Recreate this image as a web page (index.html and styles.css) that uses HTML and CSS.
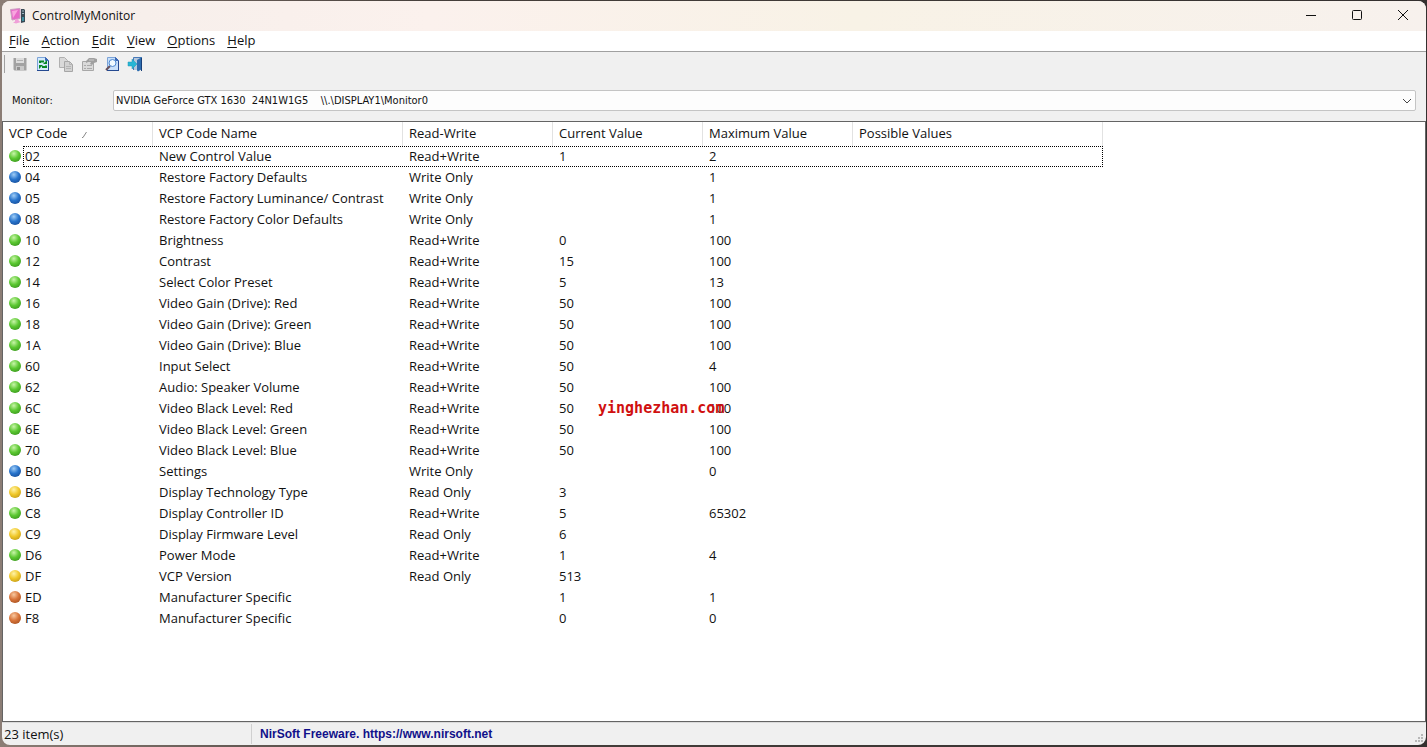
FILE: index.html
```
<!DOCTYPE html>
<html lang="en">

<head>
    <meta charset="UTF-8">
    <meta name="viewport" content="width=device-width, initial-scale=1.0">
    <title>ControlMyMonitor</title>
    <link rel="stylesheet" href="styles.css">
</head>

<body>
    <div class="window">
        <header class="title-bar">
            <svg class="app-icon" width="16" height="16" viewBox="0 0 16 16">
                <path d="M.5 1.500l9.500-1v10l-8 1.500z" fill="#e768c8" stroke="#c9a0c2"/>
                <path d="M2 3l6-1-5 8z" fill="#f8a6df"/>
                <path d="M5 11h3l1 2 2 1-5 1.500-3-1 2-1z" fill="#f0a0d8"/>
                <path d="M11 1h3l1 1v12l-4 1z" fill="#3a4a54"/>
                <path d="M12 3h2M12 5.500h2" stroke="#9fb8c4"/>
                <path d="M12 9h2v4h-2z" fill="#3f8fa0"/>
            </svg>
            <h1>ControlMyMonitor</h1>
            <div class="window-buttons">
                <button type="button" aria-label="Minimize">
                    <svg width="12" height="12" viewBox="0 0 12 12"><path d="M1 6.500h10"/></svg>
                </button>
                <button type="button" aria-label="Maximize">
                    <svg width="12" height="12" viewBox="0 0 12 12"><rect x="1.5" y="1.5" width="9" height="9" rx="1"/></svg>
                </button>
                <button type="button" aria-label="Close">
                    <svg width="12" height="12" viewBox="0 0 12 12"><path d="M1 1l10 10M11 1L1 11"/></svg>
                </button>
            </div>
        </header>

        <nav class="menu-bar">
            <button type="button"><u>F</u>ile</button>
            <button type="button"><u>A</u>ction</button>
            <button type="button"><u>E</u>dit</button>
            <button type="button"><u>V</u>iew</button>
            <button type="button"><u>O</u>ptions</button>
            <button type="button"><u>H</u>elp</button>
        </nav>

        <div class="tool-bar">
            <button type="button" aria-label="Save" disabled>
                <svg width="16" height="16" viewBox="0 0 16 16">
                    <path d="M1.500 2h13v12.500h-12l-1-1z" fill="#a2a2a2"/>
                    <path d="M4 2h8v5H4z" fill="#dcdcdc"/>
                    <path d="M5 4.500h6" stroke="#b0b0b0"/>
                    <path d="M4 10h8v4.500H4z" fill="#c9c9c9"/>
                    <path d="M5 11h3v3H5z" fill="#909090"/>
                </svg>
            </button>
            <button type="button" aria-label="Refresh">
                <svg width="16" height="16" viewBox="0 0 16 16">
                    <path d="M2.500 1.500h8l3 3v10h-11z" fill="#d3eafc" stroke="#7ba3d8"/>
                    <path d="M2 14.500h12M13.500 5v10" stroke="#254a91"/>
                    <path d="M10.500 1.500v3h3z" fill="#3b68b5" stroke="#3b68b5"/>
                    <path d="M5 7V5.500h4M11 9.500V11H7" fill="none" stroke="#078827" stroke-width="2"/>
                    <path d="M8 8h4V4zM8 9H4v4z" fill="#078827"/>
                </svg>
            </button>
            <button type="button" aria-label="Copy" disabled>
                <svg width="16" height="16" viewBox="0 0 16 16">
                    <path d="M1.500 1.500h5l3 3v7h-8z" fill="#d9d9d9" stroke="#b0b0b0"/>
                    <path d="M6.500 5.500h5l3 3v7h-8z" fill="#d2d2d2" stroke="#a6a6a6"/>
                    <path d="M11.500 5.500v3h3M8 10.500h5M8 12.500h5" fill="none" stroke="#b4b4b4"/>
                </svg>
            </button>
            <button type="button" aria-label="Properties" disabled>
                <svg width="16" height="16" viewBox="0 0 16 16">
                    <path d="M1.500 5.500h11v9h-11z" fill="#dadada" stroke="#a8a8a8"/>
                    <path d="M3 9.500h2M6 9.500h5M3 12.500h2M6 12.500h5" stroke="#aaa"/>
                    <path d="M5 5l3-3h5l3 1v3l-3 1-2 2-2-1 1-2H7L5 7z" fill="#a0a0a0"/>
                    <path d="M8 4h5" stroke="#c9c9c9"/>
                </svg>
            </button>
            <button type="button" aria-label="Find">
                <svg width="16" height="16" viewBox="0 0 16 16">
                    <path d="M3.500 1.500h8l3 3v10h-11z" fill="#c8e0fa" stroke="#7ba3d8"/>
                    <path d="M3 14.500h12M14.500 5v10" stroke="#254a91"/>
                    <path d="M11.500 1.500v3h3z" fill="#3b68b5" stroke="#3b68b5"/>
                    <path d="M6 10l-4 4" stroke="#69505a" stroke-width="2"/>
                    <circle cx="8.500" cy="7" r="3.500" fill="#f0faff" stroke="#4b86d0"/>
                </svg>
            </button>
            <button type="button" aria-label="Exit">
                <svg width="16" height="16" viewBox="0 0 16 16">
                    <path d="M6.500 14V1.500h8V14" fill="#b6c7dc" stroke="#4779b7"/>
                    <path d="M10 4l5-3v12l-4 2.500-1-1z" fill="#2e6daf"/>
                    <path d="M14.500 2v13" stroke="#173f78"/>
                    <path d="M1 6h4V3l5 5-5 5v-3H1z" fill="#26b6d5" stroke="#2495b6" stroke-width=".5"/>
                </svg>
            </button>
        </div>

        <div class="monitor-row">
            <label for="monitor">Monitor:</label>
            <div class="combo">
                <select id="monitor">
                    <option>NVIDIA GeForce GTX 1630&nbsp; 24N1W1G5&nbsp;&nbsp;&nbsp; \\.\DISPLAY1\Monitor0</option>
                </select>
                <svg width="10" height="6" viewBox="0 0 10 6"><path d="M1 1l4 4 4-4"/></svg>
            </div>
        </div>

        <main class="list-view">
            <table>
                <colgroup>
                    <col class="col">
                    <col class="col-wide">
                    <col class="col">
                    <col class="col">
                    <col class="col">
                    <col class="col-wide">
                </colgroup>
                <thead>
                    <tr>
                        <th>VCP Code <svg class="sort" width="6" height="6" viewBox="0 0 6 6"><path d="M1 5.500h1L5.500 0"/></svg></th>
                        <th>VCP Code Name</th>
                        <th>Read-Write</th>
                        <th>Current Value</th>
                        <th>Maximum Value</th>
                        <th>Possible Values</th>
                    </tr>
                </thead>
                <tbody>
                    <tr class="focused"><td><i class="ball green"></i>02</td><td>New Control Value</td><td>Read+Write</td><td>1</td><td>2</td><td></td></tr>
                    <tr><td><i class="ball blue"></i>04</td><td>Restore Factory Defaults</td><td>Write Only</td><td></td><td>1</td><td></td></tr>
                    <tr><td><i class="ball blue"></i>05</td><td>Restore Factory Luminance/ Contrast</td><td>Write Only</td><td></td><td>1</td><td></td></tr>
                    <tr><td><i class="ball blue"></i>08</td><td>Restore Factory Color Defaults</td><td>Write Only</td><td></td><td>1</td><td></td></tr>
                    <tr><td><i class="ball green"></i>10</td><td>Brightness</td><td>Read+Write</td><td>0</td><td>100</td><td></td></tr>
                    <tr><td><i class="ball green"></i>12</td><td>Contrast</td><td>Read+Write</td><td>15</td><td>100</td><td></td></tr>
                    <tr><td><i class="ball green"></i>14</td><td>Select Color Preset</td><td>Read+Write</td><td>5</td><td>13</td><td></td></tr>
                    <tr><td><i class="ball green"></i>16</td><td>Video Gain (Drive): Red</td><td>Read+Write</td><td>50</td><td>100</td><td></td></tr>
                    <tr><td><i class="ball green"></i>18</td><td>Video Gain (Drive): Green</td><td>Read+Write</td><td>50</td><td>100</td><td></td></tr>
                    <tr><td><i class="ball green"></i>1A</td><td>Video Gain (Drive): Blue</td><td>Read+Write</td><td>50</td><td>100</td><td></td></tr>
                    <tr><td><i class="ball green"></i>60</td><td>Input Select</td><td>Read+Write</td><td>50</td><td>4</td><td></td></tr>
                    <tr><td><i class="ball green"></i>62</td><td>Audio: Speaker Volume</td><td>Read+Write</td><td>50</td><td>100</td><td></td></tr>
                    <tr><td><i class="ball green"></i>6C</td><td>Video Black Level: Red</td><td>Read+Write</td><td>50</td><td>100</td><td></td></tr>
                    <tr><td><i class="ball green"></i>6E</td><td>Video Black Level: Green</td><td>Read+Write</td><td>50</td><td>100</td><td></td></tr>
                    <tr><td><i class="ball green"></i>70</td><td>Video Black Level: Blue</td><td>Read+Write</td><td>50</td><td>100</td><td></td></tr>
                    <tr><td><i class="ball blue"></i>B0</td><td>Settings</td><td>Write Only</td><td></td><td>0</td><td></td></tr>
                    <tr><td><i class="ball yellow"></i>B6</td><td>Display Technology Type</td><td>Read Only</td><td>3</td><td></td><td></td></tr>
                    <tr><td><i class="ball green"></i>C8</td><td>Display Controller ID</td><td>Read+Write</td><td>5</td><td>65302</td><td></td></tr>
                    <tr><td><i class="ball yellow"></i>C9</td><td>Display Firmware Level</td><td>Read Only</td><td>6</td><td></td><td></td></tr>
                    <tr><td><i class="ball green"></i>D6</td><td>Power Mode</td><td>Read+Write</td><td>1</td><td>4</td><td></td></tr>
                    <tr><td><i class="ball yellow"></i>DF</td><td>VCP Version</td><td>Read Only</td><td>513</td><td></td><td></td></tr>
                    <tr><td><i class="ball orange"></i>ED</td><td>Manufacturer Specific</td><td></td><td>1</td><td>1</td><td></td></tr>
                    <tr><td><i class="ball orange"></i>F8</td><td>Manufacturer Specific</td><td></td><td>0</td><td>0</td><td></td></tr>
                </tbody>
            </table>
            <span class="watermark">yinghezhan.com</span>
        </main>

        <footer class="status-bar">
            <span class="count">23 item(s)</span>
            <a href="https://www.nirsoft.net">NirSoft Freeware. https://www.nirsoft.net</a>
            <svg class="grip" width="9" height="9" viewBox="0 0 9 9">
                <path d="M6 0h2v2H6zM3 3h2v2H3zM6 3h2v2H6zM0 6h2v2H0zM3 6h2v2H3zM6 6h2v2H6z"/>
            </svg>
        </footer>
    </div>
</body>

</html>
```
FILE: styles.css
```
* {
    box-sizing: border-box;
}

body {
    margin: 0;
    height: 100vh;
    padding: 1px 1px 2px 2px;
    background: linear-gradient(to right, #8b7d75, #463f3b 30%, #34302f);
    font: 13px/20px "Open Sans", "Noto Sans", sans-serif;
    color: #111;
}

button {
    border: 0;
    padding: 0;
    background: none;
    font: inherit;
    color: inherit;
}

svg {
    display: block;
}

.window {
    display: flex;
    flex-direction: column;
    height: 100%;
    overflow: hidden;
    border-radius: 8px;
    background: #f0f0f0;
}

/* title bar */
.title-bar {
    display: flex;
    align-items: center;
    height: 30px;
    padding-left: 8px;
    background: linear-gradient(to right, #f5eeea, #fbf1ed 30%, #f8f2e6 60%, #f7f1ed);
}

.title-bar h1 {
    flex: 1;
    margin: 0 0 0 6px;
    font-size: 12px;
    font-weight: normal;
}

.window-buttons {
    display: flex;
    align-self: flex-start;
}

.window-buttons button {
    display: flex;
    align-items: center;
    justify-content: center;
    width: 46px;
    height: 28px;
}

.window-buttons svg {
    fill: none;
    stroke: #111;
}

/* menu */
.menu-bar {
    display: flex;
    align-items: flex-start;
    gap: 12px;
    height: 21px;
    padding: 0 7px;
    background: #fff;
    border-bottom: 1px solid #a0a0a0;
    line-height: 18px;
}

.menu-bar u {
    text-underline-offset: 2px;
}

/* toolbar */
.tool-bar {
    display: flex;
    align-items: center;
    gap: 7px;
    height: 24px;
    margin-left: 2px;
    padding-left: 7px;
}

.tool-bar::before {
    content: "";
    width: 1px;
    height: 18px;
    margin-left: -7px;
    background: #a0a0a0;
}

/* monitor selection */
.monitor-row {
    display: flex;
    align-items: center;
    height: 45px;
    padding: 4px 10px 0;
    font-family: "DejaVu Sans Condensed", "DejaVu Sans", sans-serif;
    font-size: 11px;
}

.monitor-row label {
    width: 101px;
}

.combo {
    position: relative;
    flex: 1;
}

.combo select {
    display: block;
    width: 100%;
    height: 21px;
    padding: 0 24px 0 2px;
    appearance: none;
    border: 1px solid #c4c4c4;
    border-radius: 2px;
    background: #fdfdfd;
    font: inherit;
    color: inherit;
}

.combo svg {
    position: absolute;
    right: 4px;
    top: 8px;
    fill: none;
    stroke: #444;
    pointer-events: none;
}

/* list */
.list-view {
    position: relative;
    flex: 1;
    overflow: hidden;
    border: 1px solid #646464;
    background: #fff;
}

.list-view table {
    table-layout: fixed;
    width: 1100px;
    border-collapse: separate;
    border-spacing: 0;
}

.col {
    width: 150px;
}

.col-wide {
    width: 250px;
}

.list-view th,
.list-view td {
    padding: 0 0 0 6px;
    line-height: 19px;
    text-align: left;
    font-weight: normal;
    white-space: nowrap;
}

.list-view th {
    height: 24px;
    padding-bottom: 2px;
    border-right: 1px solid #e2e2e2;
}

.list-view td {
    height: 21px;
}

.sort {
    display: inline-block;
    margin-left: 10px;
    fill: none;
    stroke: #888;
}

.focused {
    position: relative;
}

.focused::after {
    content: "";
    position: absolute;
    inset: 0 0 0 20px;
    border: 1px dotted #000;
}

.ball {
    display: inline-block;
    width: 12px;
    height: 12px;
    margin-right: 4px;
    border-radius: 50%;
    vertical-align: -1px;
}

.green {
    background: radial-gradient(circle at 40% 30%, #c8f5a8, #5cc832 45%, #2b8414);
}

.blue {
    background: radial-gradient(circle at 40% 30%, #9fcdf7, #2874cc 45%, #103f86);
}

.yellow {
    background: radial-gradient(circle at 40% 30%, #fff3a8, #f0c82a 45%, #b28a10);
}

.orange {
    background: radial-gradient(circle at 40% 30%, #f8c8a0, #d8743a 45%, #944417);
}

.watermark {
    position: absolute;
    left: 595px;
    top: 276px;
    font: bold 15px/20px "DejaVu Sans Mono", monospace;
    color: #d01010;
}

/* status bar */
.status-bar {
    display: flex;
    align-items: center;
    height: 23px;
    border-top: 1px solid #dadada;
}

.count {
    width: 250px;
    padding-left: 2px;
    border-right: 1px solid #d0d0d0;
}

.status-bar a {
    flex: 1;
    padding-left: 8px;
    font: bold 12px/20px "Liberation Sans", sans-serif;
    color: #10108a;
    text-decoration: none;
}

.grip {
    align-self: flex-end;
    margin: 0 2px 2px 0;
    fill: #b8b8b8;
}
```
